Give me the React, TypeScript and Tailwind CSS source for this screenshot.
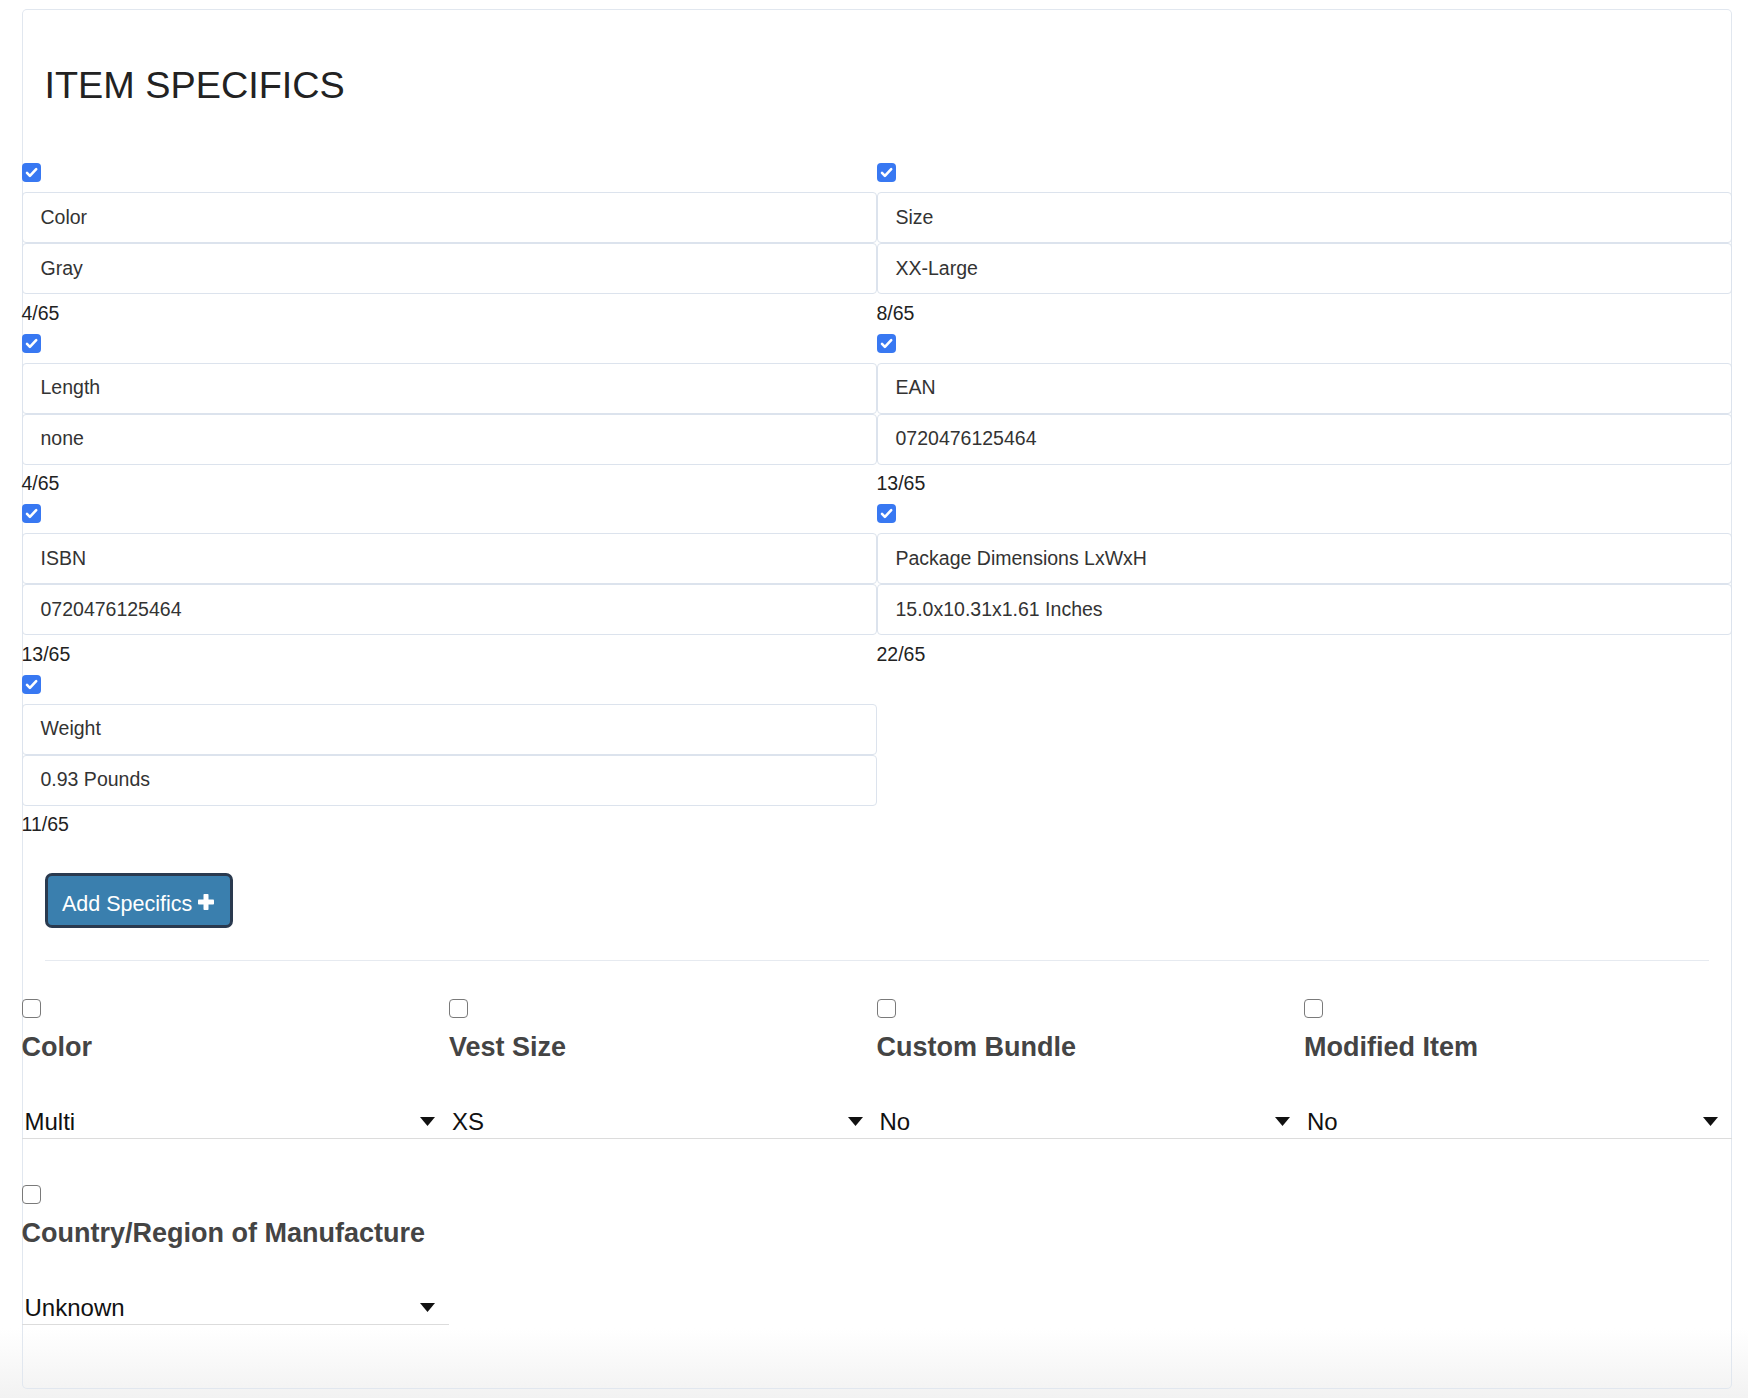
import React from 'react';

type Spec = { name: string; value: string };

const specs: Spec[] = [
  { name: 'Color', value: 'Gray' },
  { name: 'Size', value: 'XX-Large' },
  { name: 'Length', value: 'none' },
  { name: 'EAN', value: '0720476125464' },
  { name: 'ISBN', value: '0720476125464' },
  { name: 'Package Dimensions LxWxH', value: '15.0x10.31x1.61 Inches' },
  { name: 'Weight', value: '0.93 Pounds' },
];

const suggested = [
  { label: 'Color', value: 'Multi' },
  { label: 'Vest Size', value: 'XS' },
  { label: 'Custom Bundle', value: 'No' },
  { label: 'Modified Item', value: 'No' },
  { label: 'Country/Region of Manufacture', value: 'Unknown' },
];

const CheckBox: React.FC<{ checked?: boolean }> = ({ checked }) =>
  checked ? (
    <span className="flex h-[19px] w-[19px] items-center justify-center rounded-[4px] bg-[#3878f2]">
      <svg width="19" height="19" viewBox="0 0 19 19">
        <path d="M5 9.9l2.9 2.9L14.2 6.2" fill="none" stroke="#fff" strokeWidth="2.6" strokeLinecap="round" strokeLinejoin="round" />
      </svg>
    </span>
  ) : (
    <span className="block h-[19px] w-[19px] rounded-[4px] border border-[#7a7a7a] bg-white" />
  );

const SpecBlock: React.FC<{ spec: Spec }> = ({ spec }) => (
  <div className="flex flex-col">
    <CheckBox checked />
    <div className="mt-[10px] flex h-[51px] items-center rounded-[4px] border border-[#dce3ed] px-[18px] text-[19.5px] text-[#333]">
      {spec.name}
    </div>
    <div className="flex h-[51px] items-center rounded-[4px] border border-[#dce3ed] px-[18px] text-[19.5px] text-[#333]">
      {spec.value}
    </div>
    <div className="mb-[9px] mt-[6.5px] text-[19.5px] leading-[24px] text-[#222]">
      {spec.value.length}/65
    </div>
  </div>
);

const Arrow = () => (
  <svg width="15" height="9" viewBox="0 0 15 9">
    <path d="M0 0h15L7.5 9z" fill="#111" />
  </svg>
);

const App: React.FC = () => {
  return (
    <div className="min-h-[1398px] bg-[linear-gradient(to_bottom,#ffffff_95%,#f2f2f2)] pl-[21.5px] pt-[9px] font-['Liberation_Sans',Arial,sans-serif]">
      <div className="w-[1710px] rounded-[5px] pb-[18px] shadow-[inset_0_0_0_1px_#e1e7ef]">
        <h1 className="pl-[23px] pt-[53px] text-[37.8px] leading-[46px] text-[#222]">ITEM SPECIFICS</h1>

        <div className="mt-[55px] grid grid-cols-2">
          {specs.map((s) => (
            <SpecBlock key={s.name} spec={s} />
          ))}
        </div>

        <button className="ml-[23.5px] mt-[28px] flex h-[55px] w-[188px] items-center gap-[6px] rounded-[7px] border-[3px] border-[#2a3a4f] bg-[#3a7fae] pl-[14px] pt-[8px] text-[21.5px] text-white">
          Add Specifics
          <svg width="16" height="16" viewBox="0 0 16 16" className="-mt-[5px]">
            <rect x="5.5" y="0" width="5" height="16" rx="0.8" fill="#fff" />
            <rect x="0" y="5.5" width="16" height="5" rx="0.8" fill="#fff" />
          </svg>
        </button>

        <div className="mx-[23px] mt-[32px] border-t border-[#e6eaf0]" />

        <div className="mt-[38px] grid grid-cols-4">
          {suggested.map((s) => (
            <div key={s.label} className="mb-[46px] flex flex-col">
              <CheckBox />
              <div className="mt-[13px] text-[27px] font-bold leading-[32px] text-[#444]">{s.label}</div>
              <div className="mt-[40px] flex h-[36px] items-center justify-between border-b border-[#dcdcdc] pl-[3px] pr-[14px] pt-[2px] text-[24px] text-[#111]">
                <span>{s.value}</span>
                <Arrow />
              </div>
            </div>
          ))}
        </div>
      </div>
    </div>
  );
};

export default App;
